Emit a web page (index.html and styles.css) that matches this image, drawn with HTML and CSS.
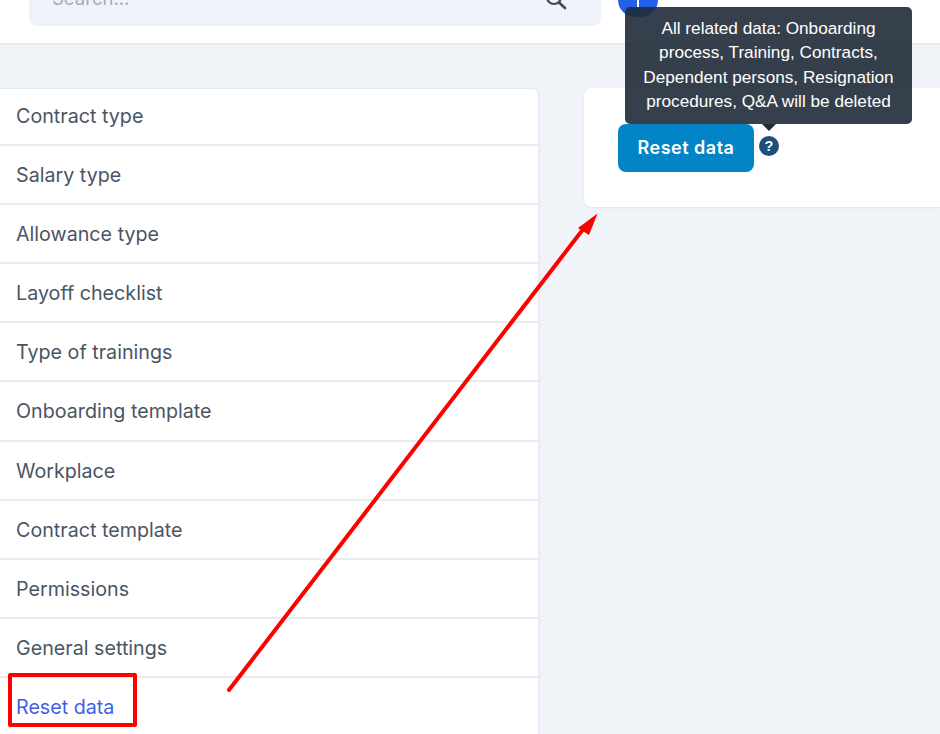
FILE: index.html
```html
<!DOCTYPE html>
<html lang="en">
<head>
<meta charset="utf-8">
<title>Reset data</title>
<link rel="stylesheet" href="styles.css">
</head>
<body>
<div class="page">
  <header class="topbar">
    <div class="search">
      <span class="search-text">Search...</span>
      <svg class="search-icon" width="26" height="26" viewBox="0 0 26 26"><circle cx="10" cy="6" r="7" fill="none" stroke="#3e4a57" stroke-width="2.2"/><path d="M15 11.5 21 17" stroke="#3e4a57" stroke-width="2.6" stroke-linecap="round"/></svg>
    </div>
    <div class="avatar"><span class="avatar-mark"></span></div>
  </header>
  <main class="content">
    <nav class="menu">
      <a class="item">Contract type</a>
      <a class="item">Salary type</a>
      <a class="item">Allowance type</a>
      <a class="item">Layoff checklist</a>
      <a class="item">Type of trainings</a>
      <a class="item">Onboarding template</a>
      <a class="item">Workplace</a>
      <a class="item">Contract template</a>
      <a class="item">Permissions</a>
      <a class="item">General settings</a>
      <a class="item active">Reset data</a>
    </nav>
    <section class="panel">
      <button class="reset-btn">Reset data</button>
      <span class="help">?</span>
    </section>
  </main>
  <div class="tooltip">All related data: Onboarding process, Training, Contracts, Dependent persons, Resignation procedures, Q&amp;A will be deleted</div>
  <div class="tip-arrow"></div>
  <div class="red-box"></div>
  <svg class="red-arrow" width="940" height="734" viewBox="0 0 940 734">
    <path d="M229 690 584 228" stroke="#ff0000" stroke-width="4" stroke-linecap="round" fill="none"/>
    <path d="M597.5 213.5 578 228 589 235Z" fill="#ff0000"/>
  </svg>
</div>
</body>
</html>
```
FILE: styles.css
```css
* { box-sizing: border-box; }
html, body { margin: 0; padding: 0; }
body { font-family: Inter, "Liberation Sans", sans-serif; background: #f0f4f9; }
.page { position: relative; width: 940px; height: 734px; overflow: hidden; background: #f0f4f9; }
.topbar { height: 45px; background: #fff; border-bottom: 2px solid #e7ebf1; display: flex; align-items: flex-start; padding-left: 29px; gap: 17px; }
.search { width: 572px; height: 26px; background: #eff2f8; border-radius: 0 0 8px 8px; display: flex; justify-content: space-between; align-items: flex-end; overflow: hidden; position: relative; padding: 0 31px 0 23px; }
.search-text { font-size: 18.5px; line-height: 20px; color: #a3acb9; margin-bottom: 18px; }
.search-icon { flex: none; margin-bottom: 9px; }
.avatar { width: 40px; height: 17px; background: #2360e8; border-radius: 0 0 20px 20px; position: relative; }
.avatar-mark { position: absolute; left: 19px; top: 0; width: 2px; height: 7px; background: #fff; }
.content { display: flex; align-items: flex-start; padding-top: 43px; }
.menu { width: 540px; height: 660px; background: #fff; border-radius: 0 8px 0 0; border-right: 2px solid #e8ecf2; border-top: 1px solid #e6eaf0; display: flex; flex-direction: column; }
.item { height: 59.1px; flex: none; padding: 15px 16px 0; font-size: 19.7px; line-height: 28px; color: #4a5564; border-bottom: 2px solid #e9edf3; }
.item:first-child { height: 57.1px; padding-top: 13px; }
.item.active { color: #3f5fe6; border-bottom: 0; }
.panel { margin-left: 44px; width: 356px; height: 119px; background: #fff; border-radius: 8px 0 0 8px; box-shadow: 0 1px 2px #e0e5ec; display: flex; align-items: flex-start; padding: 36px 0 0 34px; }
.reset-btn { width: 136px; height: 48px; border: 0; border-radius: 8px; background: #0284c7; color: #fff; font-family: Inter, "Liberation Sans", sans-serif; font-size: 18px; font-weight: 600; letter-spacing: 0.5px; padding: 0 0 2px; }
.help { margin: 12px 0 0 5px; width: 20px; height: 20px; border-radius: 50%; background: #1f4e79; color: #fff; font-family: "Liberation Sans", sans-serif; font-weight: 700; font-size: 14.5px; line-height: 20px; text-align: center; }
.tooltip { position: absolute; left: 625px; top: 7px; width: 287px; height: 117px; background: rgba(32, 43, 56, 0.9); border-radius: 5px; color: #fff; font-family: "Liberation Sans", sans-serif; font-size: 17.2px; line-height: 24.3px; text-align: center; padding: 9px 6px 0; }
.tip-arrow { position: absolute; left: 762px; top: 124px; width: 0; height: 0; border-left: 7px solid transparent; border-right: 7px solid transparent; border-top: 7px solid #1f2937; }
.red-box { position: absolute; left: 8px; top: 673px; width: 129px; height: 54px; border: 4px solid #ff0000; border-radius: 2px; }
.red-arrow { position: absolute; left: 0; top: 0; pointer-events: none; }
```
